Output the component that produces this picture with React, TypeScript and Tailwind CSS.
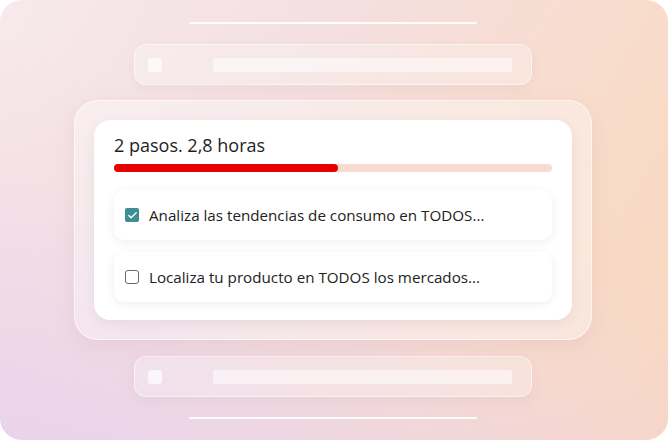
import { Check } from "lucide-react";

function GhostRow() {
  return (
    <div className="ml-[134px] flex h-[41px] w-[398px] items-center rounded-xl border border-white/50 bg-white/25 px-[13px] shadow-[0_4px_12px_rgba(200,150,150,0.12)]">
      <div className="h-[14px] w-[14px] rounded-[3px] bg-white/70" />
      <div className="ml-[51px] h-[14px] w-[299px] rounded-[2px] bg-white/50" />
    </div>
  );
}

function Task({ done, label }: { done?: boolean; label: string }) {
  return (
    <div className="flex h-[50px] items-center gap-[10px] rounded-[10px] bg-white px-[11px] shadow-[0_2px_10px_rgba(0,0,0,0.07)]">
      {done ? (
        <div className="flex h-[14px] w-[14px] items-center justify-center rounded-[2px] bg-[#3d8f93]">
          <Check className="h-[11px] w-[11px] text-white" strokeWidth={3} />
        </div>
      ) : (
        <div className="h-[14px] w-[14px] rounded-[3px] border border-[#6b6b6b] bg-white" />
      )}
      <span className="text-[15.2px] text-[#222]">{label}</span>
    </div>
  );
}

export default function App() {
  return (
    <div className="h-[440px] w-[668px] bg-white font-['Open_Sans',sans-serif]">
      <div className="flex h-full w-full flex-col rounded-[22px] bg-[linear-gradient(120deg,#f7e9ec_0%,#f4e0e2_35%,#f8dccc_70%,#fad6bd_100%)]">
        <div className="flex h-full flex-col rounded-[22px] bg-[linear-gradient(20deg,rgba(232,210,236,0.9)_0%,rgba(240,215,225,0.3)_40%,rgba(255,255,255,0)_60%)] pt-[22px]">
          <div className="ml-[189px] h-[2px] w-[288px] rounded bg-white/90" />
          <div className="mt-[20px]">
            <GhostRow />
          </div>
          <div className="ml-[74px] mt-[15px] w-[518px] rounded-[24px] border border-white/60 bg-white/35 p-[19px] shadow-[0_6px_20px_rgba(190,140,140,0.15)]">
            <div className="rounded-[16px] bg-white px-[20px] pb-[18px] pt-[12px] shadow-[0_4px_14px_rgba(0,0,0,0.06)]">
              <div className="text-[18px] leading-[26px] text-[#1e1e1e]">2 pasos. 2,8 horas</div>
              <div className="mt-[6px] h-[8px] w-full rounded-full bg-[#f8dcd2]">
                <div className="h-full w-[224px] rounded-full bg-[#e60000]" />
              </div>
              <div className="mt-[18px] flex flex-col gap-[12px]">
                <Task done label="Analiza las tendencias de consumo en TODOS..." />
                <Task label="Localiza tu producto en TODOS los mercados..." />
              </div>
            </div>
          </div>
          <div className="mt-[16px]">
            <GhostRow />
          </div>
          <div className="ml-[189px] mt-[20px] h-[2px] w-[288px] rounded bg-white/90" />
        </div>
      </div>
    </div>
  );
}
